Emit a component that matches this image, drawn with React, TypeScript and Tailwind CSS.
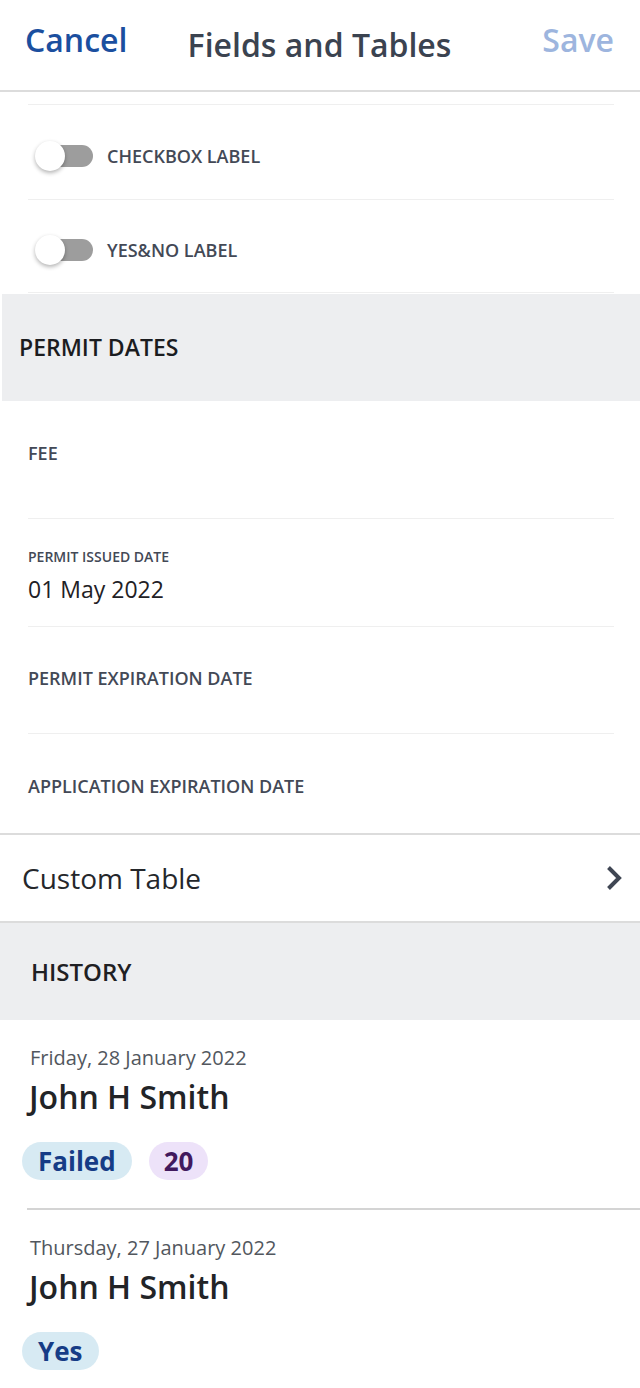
import React from 'react';

const font = { fontFamily: '"Open Sans", "Noto Sans", sans-serif' };

function Toggle() {
  return (
    <div className="relative ml-[7px] h-[32px] w-[60px] shrink-0">
      <div className="absolute right-[2px] top-[5px] h-[22px] w-[48px] rounded-full bg-[#9d9d9d]" />
      <div className="absolute left-[0px] top-[1px] h-[30px] w-[30px] rounded-full bg-white shadow-[0_2px_4px_rgba(0,0,0,0.3)]" />
    </div>
  );
}

function ToggleRow({ label, h }: { label: string; h: string }) {
  return (
    <div className={`flex items-center border-b border-[#efefef] pt-[8px] ${h}`}>
      <Toggle />
      <span className="ml-[12px] text-[18px] font-semibold leading-none text-[#434956]">{label}</span>
    </div>
  );
}

function Pill({ text, tone }: { text: string; tone: 'blue' | 'purple' }) {
  const cls =
    tone === 'blue'
      ? 'bg-[#d7eaf3] text-[#163c86] px-[16px]'
      : 'bg-[#ede2f9] text-[#42195e] px-[15px]';
  return (
    <span className={`flex h-[38px] items-center rounded-full text-[26px] font-bold leading-none ${cls}`}>
      {text}
    </span>
  );
}

function HistoryItem({ date, name, pills, last }: { date: string; name: string; pills: { text: string; tone: 'blue' | 'purple' }[]; last?: boolean }) {
  return (
    <div className={`ml-[27px] pt-[28px] ${last ? 'pb-[18px]' : 'border-b-2 border-[#d4d4d4] pb-[28px]'}`}>
      <div className="ml-[3px] text-[20px] leading-none text-[#52575e]">{date}</div>
      <div className="ml-[2px] mt-[13px] text-[32px] font-semibold leading-none text-[#222427]">{name}</div>
      <div className="-ml-[5px] mt-[29px] flex gap-[17px]">
        {pills.map((p, i) => (
          <Pill key={i} text={p.text} tone={p.tone} />
        ))}
      </div>
    </div>
  );
}

export default function App() {
  return (
    <div className="min-h-[1388px] w-[640px] bg-white" style={font}>
      {/* top bar */}
      <div className="grid h-[92px] grid-cols-[1fr_auto_1fr] items-start border-b-2 border-[#dcdcdc] pl-[25px] pr-[26px] pt-[24px]">
        <span className="text-[32px] font-semibold leading-none text-[#1b4f9f]">Cancel</span>
        <span className="mt-[5px] text-[32px] font-semibold leading-none text-[#3b4350]">Fields and Tables</span>
        <span className="text-right text-[32px] font-semibold leading-none text-[#9db5de]">Save</span>
      </div>

      <div className="ml-[28px] mr-[26px]">
        <div className="h-[13px] border-b border-[#efefef]" />
        <ToggleRow label="CHECKBOX LABEL" h="h-[95px]" />
        <ToggleRow label="YES&NO LABEL" h="h-[93px]" />
      </div>

      <div className="ml-[2px] mt-[1px] flex h-[107px] items-center bg-[#edeef0] pl-[17px]">
        <span className="text-[23px] font-semibold leading-none text-[#1b1c1f]">PERMIT DATES</span>
      </div>

      <div className="ml-[28px] mr-[26px]">
        <div className="h-[118px] border-b border-[#efefef] pt-[43px]">
          <div className="text-[18px] font-semibold leading-none text-[#434956]">FEE</div>
        </div>
        <div className="h-[108px] border-b border-[#efefef] pt-[31px]">
          <div className="text-[14px] font-semibold leading-none text-[#434956]">PERMIT ISSUED DATE</div>
          <div className="mt-[14px] text-[23px] font-medium leading-none text-[#1f2125]">01 May 2022</div>
        </div>
        <div className="h-[107px] border-b border-[#efefef] pt-[42px]">
          <div className="text-[18px] font-semibold leading-none text-[#434956]">PERMIT EXPIRATION DATE</div>
        </div>
        <div className="h-[99px] pt-[43px]">
          <div className="text-[18px] font-semibold leading-none text-[#434956]">APPLICATION EXPIRATION DATE</div>
        </div>
      </div>

      {/* custom table link */}
      <div className="flex h-[90px] items-center justify-between border-y-2 border-[#dcdcdc] pl-[22px] pr-[18px]">
        <span className="text-[28px] leading-none text-[#25272b]">Custom Table</span>
        <svg width="16" height="26" viewBox="0 0 16 26" fill="none">
          <polyline points="2.5,2.5 13,13 2.5,23.5" stroke="#3f4653" strokeWidth="4" strokeLinejoin="miter" />
        </svg>
      </div>

      <div className="flex h-[97px] items-center bg-[#edeef0] pl-[31px]">
        <span className="text-[24px] font-semibold leading-none text-[#1f2023]">HISTORY</span>
      </div>

      <HistoryItem
        date="Friday, 28 January 2022"
        name="John H Smith"
        pills={[
          { text: 'Failed', tone: 'blue' },
          { text: '20', tone: 'purple' },
        ]}
      />
      <HistoryItem date="Thursday, 27 January 2022" name="John H Smith" pills={[{ text: 'Yes', tone: 'blue' }]} last />
    </div>
  );
}
